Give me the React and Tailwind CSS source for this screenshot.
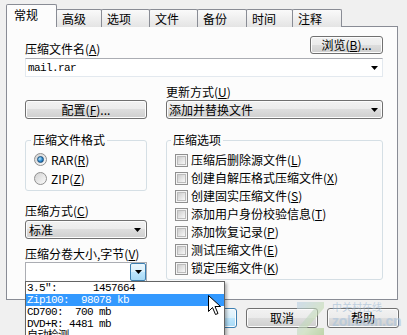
import React from 'react';

const btn = "flex items-center justify-center rounded-[3px] border border-[#707070] bg-[linear-gradient(to_bottom,#f2f2f2_0%,#ebebeb_50%,#dddddd_50%,#cfcfcf_100%)] shadow-[inset_0_0_0_1px_#fcfcfc] text-[12px] leading-[14px] text-black";

function Key({ children }) {
    return <span className="underline underline-offset-[1px]">{children}</span>;
}

function Arrow() {
    return (
        <svg width="7" height="4" viewBox="0 0 7 4">
            <path d="M0 0h7L3.5 4z" fill="#000" />
        </svg>
    );
}

const tabs = [
    { label: '高级', w: 'w-[46px]' },
    { label: '选项', w: 'w-[49px]' },
    { label: '文件', w: 'w-[49px]' },
    { label: '备份', w: 'w-[50px]' },
    { label: '时间', w: 'w-[47px]' },
    { label: '注释', w: 'w-[50px]' },
];

const options = [
    ['压缩后删除源文件', 'L'],
    ['创建自解压格式压缩文件', 'X'],
    ['创建固实压缩文件', 'S'],
    ['添加用户身份校验信息', 'T'],
    ['添加恢复记录', 'P'],
    ['测试压缩文件', 'E'],
    ['锁定压缩文件', 'K'],
];

const sizes = [
    '3.5″:      1457664',
    'Zip100:  98078 kb',
    'CD700:  700 mb',
    'DVD+R: 4481 mb',
    '自动检测',
];

function Checkbox() {
    return (
        <div className="h-[13px] w-[13px] shrink-0 border border-[#8f8f8f] bg-[#f4f4f4] p-[1px]">
            <div className="h-full w-full border border-[#bcbcbc] bg-[linear-gradient(135deg,#cdcdcd,#f8f8f8)]" />
        </div>
    );
}

function Radio({ checked }) {
    return (
        <div className="flex h-[13px] w-[13px] shrink-0 items-center justify-center rounded-full border border-[#8f8f8f] bg-[linear-gradient(135deg,#d2d2d2,#fbfbfb)]">
            {checked && (
                <div className="h-[7px] w-[7px] rounded-full border border-[#1d4f7a] bg-[radial-gradient(circle_at_35%_35%,#b9e6fb,#2b8ad0_55%,#0f4f8a)]" />
            )}
        </div>
    );
}

export default function App() {
    return (
        <div className="relative h-[335px] w-[407px] overflow-hidden bg-[#f0f0f0] font-['Noto_Sans_CJK_SC','Noto_Sans',sans-serif] text-[12px] leading-[14px] text-black">
            {/* Tabs */}
            <div className="flex h-[27px] items-end pl-[6px] pt-[4px]">
                <div className="relative z-10 h-[23px] w-[51px] rounded-t-[2px] border border-b-0 border-[#898c95] bg-[#fcfcfc] pl-[7px] pt-[3px]">
                    常规
                </div>
                {tabs.map((t) => (
                    <div
                        key={t.label}
                        className={`-ml-px h-[18px] ${t.w} rounded-t-[2px] border border-b-0 border-[#898c95] bg-[linear-gradient(to_bottom,#fafafa,#e4e4e4)] pl-[5px] pt-[2px]`}
                    >
                        {t.label}
                    </div>
                ))}
            </div>

            {/* Panel */}
            <div className="-mt-px ml-[6px] h-[274px] w-[392px] border border-[#898c95] bg-[#fcfcfc] pl-[18px] pr-[14px] pt-[9px]">
                <div className="flex h-[22px] justify-between">
                    <div className="self-end pb-[2px]">
                        压缩文件名(<Key>A</Key>)
                    </div>
                    <div className={`${btn} h-[18px] w-[73px]`}>
                        浏览(<Key>B</Key>)...
                    </div>
                </div>
                <div className="flex h-[19px] items-center justify-between border border-[#e3e9ef] border-t-[#abadb3] bg-white pl-[2px] pr-[4px]">
                    <span className="font-['Liberation_Mono',monospace] text-[11px] tracking-[-0.6px]">mail.rar</span>
                    <Arrow />
                </div>

                <div className="flex gap-[19px]">
                    {/* Left column */}
                    <div className="flex w-[122px] flex-col">
                        <div className={`${btn} mt-[23px] h-[19px] w-full`}>
                            配置(<Key>F</Key>)...
                        </div>
                        <fieldset className="mt-[14px] rounded-[3px] border border-[#d5dfe5] pb-[2px] pl-[8px] pt-[3px]">
                            <legend className="ml-[-3px] px-[2px] leading-[14px]">压缩文件格式</legend>
                            <div className="flex h-[19px] items-center gap-[4px]">
                                <Radio checked />
                                <span>RAR(<Key>R</Key>)</span>
                            </div>
                            <div className="flex h-[19px] items-center gap-[4px]">
                                <Radio />
                                <span>ZIP(<Key>Z</Key>)</span>
                            </div>
                        </fieldset>
                        <div className="mt-[13px]">
                            压缩方式(<Key>C</Key>)
                        </div>
                        <div className={`${btn} mt-[2px] h-[19px] w-full !justify-between pl-[3px] pr-[5px]`}>
                            <span>标准</span>
                            <Arrow />
                        </div>
                        <div className="mt-[8px]">
                            压缩分卷大小,字节(<Key>V</Key>)
                        </div>
                        <div className="mt-[1px] flex h-[20px] w-full border border-[#abadb3] bg-white">
                            <div className="flex-1" />
                            <div className="flex w-[16px] items-center justify-center rounded-[2px] border border-[#3c7fb1] bg-[linear-gradient(to_bottom,#eaf6fd_0%,#d9f0fc_50%,#bee6fd_50%,#a7d9f5_100%)]">
                                <Arrow />
                            </div>
                        </div>
                    </div>

                    {/* Right column */}
                    <div className="flex flex-1 flex-col">
                        <div className="mt-[8px]">
                            更新方式(<Key>U</Key>)
                        </div>
                        <div className={`${btn} mt-[1px] h-[19px] w-full !justify-between pl-[2px] pr-[4px]`}>
                            <span>添加并替换文件</span>
                            <Arrow />
                        </div>
                        <fieldset className="mt-[14px] rounded-[3px] border border-[#d5dfe5] pb-[2px] pl-[8px] pt-[4px]">
                            <legend className="ml-[-4px] px-[2px] leading-[14px]">压缩选项</legend>
                            {options.map(([label, key]) => (
                                <div key={key} className="flex h-[18px] items-center gap-[3px]">
                                    <Checkbox />
                                    <span>
                                        {label}(<Key>{key}</Key>)
                                    </span>
                                </div>
                            ))}
                        </fieldset>
                    </div>
                </div>
            </div>

            {/* Bottom buttons */}
            <div className="mt-[8px] flex justify-end gap-[9px] pr-[8px]">
                <div className="flex h-[20px] w-[72px] items-center justify-center rounded-[3px] border border-[#3c7fb1] bg-[linear-gradient(to_bottom,#eaf6fd_0%,#d9f0fc_50%,#bee6fd_50%,#a7d9f5_100%)] shadow-[inset_0_0_0_1px_#fcfcfc]">
                    确定
                </div>
                <div className={`${btn} h-[20px] w-[72px]`}>取消</div>
                <div className={`${btn} h-[20px] w-[72px]`}>帮助</div>
            </div>

            {/* Watermark */}
            <div className="pointer-events-none absolute left-[296px] top-[301px] flex items-start gap-[7px] opacity-60">
                <svg width="29" height="34" viewBox="0 0 29 34">
                    <defs>
                        <linearGradient id="zg" x1="0" y1="0" x2="1" y2="1">
                            <stop offset="0" stopColor="#b9cfe6" />
                            <stop offset="0.6" stopColor="#c5ddb2" />
                            <stop offset="1" stopColor="#9fc37d" />
                        </linearGradient>
                    </defs>
                    <path d="M1 1h27v6L11 27h17v7H1v-6L18 8H1z" fill="url(#zg)" />
                </svg>
                <div className="flex flex-col">
                    <span className="text-[10px] leading-[12px] text-[#9bb8d4]">中关村在线</span>
                    <span className="font-['Liberation_Sans',sans-serif] text-[14px] font-bold leading-[16px] tracking-[-0.3px] text-[#a9c3dc]">zol.com.cn</span>
                </div>
            </div>

            {/* Open dropdown list */}
            <div className="absolute left-[25px] top-[281px] h-[62px] w-[200px] border border-[#646464] bg-white shadow-[2px_2px_3px_rgba(0,0,0,0.3)]">
                {sizes.map((s, i) => (
                    <div
                        key={s}
                        className={`h-[12px] whitespace-pre pl-[1px] font-['Liberation_Mono','Noto_Sans_CJK_SC',monospace] text-[11px] leading-[12px] tracking-[-0.6px] ${i === 1 ? 'bg-[#3399ff] text-white' : 'text-black'}`}
                    >
                        {s}
                    </div>
                ))}
            </div>

            {/* Mouse cursor */}
            <svg className="absolute left-[208px] top-[295px]" width="13" height="21" viewBox="0 0 13 21">
                <path d="M0.5 0.5v16l4-4 3 7 2.5-1-3-7h5.5z" fill="#fff" stroke="#000" strokeWidth="1" strokeLinejoin="miter" />
            </svg>
        </div>
    );
}
